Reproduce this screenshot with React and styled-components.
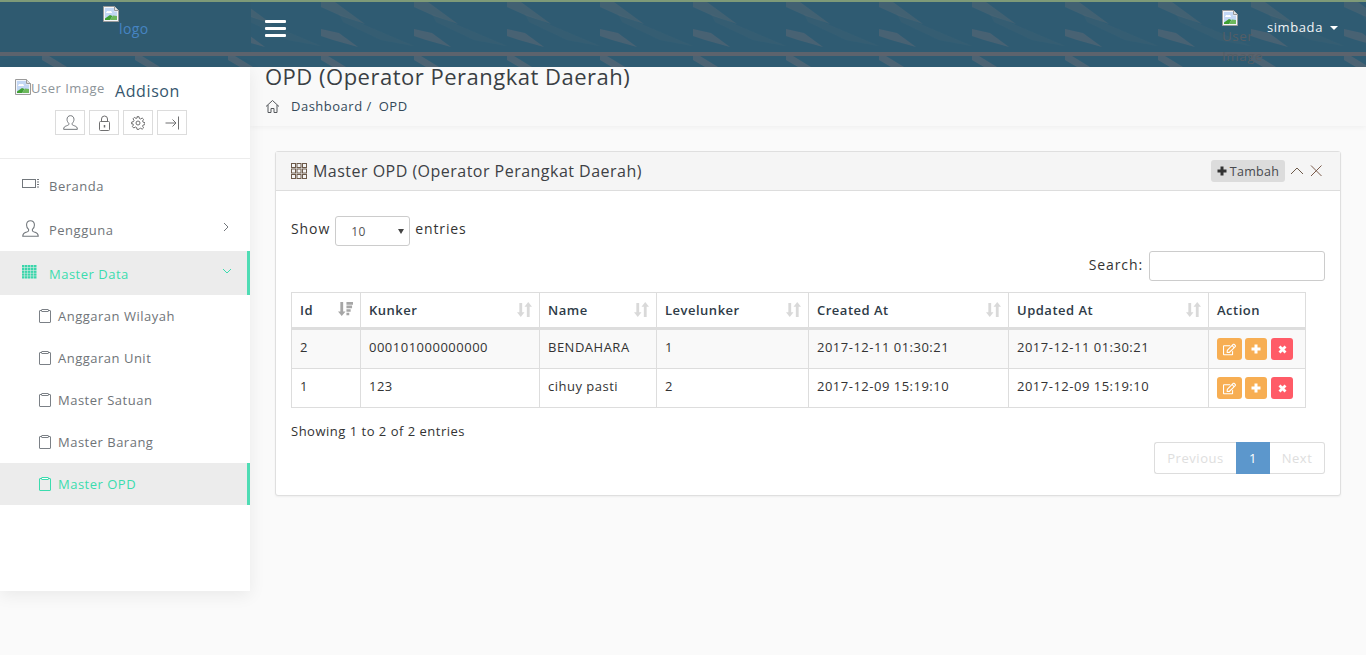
import React from "react";
import styled, { createGlobalStyle } from "styled-components";
import { FaRegEdit } from "react-icons/fa";

const Global = createGlobalStyle`
  html, body { margin: 0; padding: 0; background: #fafafa; }
  body { font-family: "Open Sans", "Liberation Sans", sans-serif; font-size: 13px; color: #333; letter-spacing: 0.5px; overflow: hidden; }
  * { box-sizing: border-box; }
`;

const Page = styled.div`
  width: 1366px; height: 655px; display: flex; flex-direction: column; background: #fafafa;
`;
const Header = styled.header`
  position: relative; height: 67px; flex: none; display: flex; align-items: flex-start;
  background: #2f5b72; border-top: 2px solid #7e9a78;
`;
const Pattern = styled.svg`
  position: absolute; left: 0; top: -2px; width: 100%; height: 67px;
`;
const LogoSlot = styled.div`
  position: relative; width: 251px; height: 50px; flex: none; background: #2f5a70; padding: 4px 0 0 103px;
`;
const LogoLink = styled.span`
  display: block; color: #4684c2; font-size: 14px; letter-spacing: 0.4px;
  svg { display: block; }
  span { display: block; margin-left: 16px; line-height: 13px; }
`;
const Band = styled.div`
  position: absolute; left: 0; right: 0; top: 50px; height: 4px; background: #5c636d;
`;
const Burger = styled.button`
  position: relative; margin: 18px 0 0 14px; padding: 0; width: 21px; height: 17px; border: 0; background: none;
  display: flex; flex-direction: column; justify-content: space-between;
  i { display: block; height: 3px; background: #fff; border-radius: 1px; }
`;
const UserNav = styled.div`
  position: relative; margin-left: auto; display: flex; align-items: flex-start; padding-right: 28px; height: 65px;
`;
const Avatar = styled.span`
  display: block; width: 39px; margin-top: 8px; margin-right: 6px; color: #555e66; font-size: 13.5px; line-height: 20px; letter-spacing: 0.5px;
  svg { display: block; }
`;
const UserName = styled.span`
  color: #f1f4f6; font-size: 13px; line-height: 18px; margin-top: 16px; display: flex; align-items: center; gap: 7px; letter-spacing: 0.6px;
`;
const Caret = styled.i`
  display: block; width: 0; height: 0; border-left: 4px solid transparent; border-right: 4px solid transparent; border-top: 4px solid #fff; margin-top: 2px;
`;

const Body = styled.div`
  display: flex; flex: 1; min-height: 0; align-items: flex-start;
`;
const Sidebar = styled.aside`
  width: 250px; height: 524px; flex: none; background: #fff; box-shadow: 0 4px 16px rgba(0,0,0,.07); position: relative;
`;
const Profile = styled.div`
  height: 92px; border-bottom: 1px solid #ececec; position: relative; padding: 12px 0 0 15px;
`;
const ProfileTop = styled.div`
  display: flex; align-items: flex-start;
`;
const UserAlt = styled.span`
  display: flex; color: #8d9499; font-size: 13px; line-height: 18px; letter-spacing: .5px; width: 100px;
  b { font-weight: 400; }
`;
const ProfileName = styled.span`
  color: #36566e; font-size: 16px; line-height: 22px; margin-top: 1px; letter-spacing: .6px;
`;
const ProfileButtons = styled.div`
  display: flex; gap: 4px; margin: 8px 0 0 40px;
`;
const SquareBtn = styled.span`
  width: 30px; height: 25px; border: 1px solid #dcdcdc; display: flex; align-items: center; justify-content: center; color: #6b6f73;
`;
const Nav = styled.nav`
  padding-top: 4px;
`;
const NavItem = styled.div`
  height: 44px; display: flex; align-items: center; padding-left: 22px; position: relative;
  color: ${p => p.$active ? "#3bdcae" : "#6f7478"};
  background: ${p => p.$active ? "#ececec" : "transparent"};
  border-right: 3px solid ${p => p.$active ? "#4fdcb4" : "transparent"};
`;
const NavIcon = styled.span`
  width: 27px; flex: none; display: flex; align-items: center; margin-top: -2px;
`;
const NavLabel = styled.span`
  font-size: 13px; flex: 1; letter-spacing: .5px; margin-top: 1px;
`;
const NavArrow = styled.span`
  width: 25px; flex: none; display: flex; margin-top: -4px;
`;
const SubItem = styled.div`
  height: 42px; display: flex; align-items: center; padding-left: 39px; font-size: 13px; letter-spacing: .5px;
  color: ${p => p.$active ? "#3bdcae" : "#6f7478"};
  background: ${p => p.$active ? "#ececec" : "transparent"};
  border-right: 3px solid ${p => p.$active ? "#4fdcb4" : "transparent"};
  svg { margin-right: 7px; flex: none; margin-top: -1px; }
`;

const Main = styled.main`
  flex: 1; min-width: 0; display: flex; flex-direction: column;
`;
const TitleBar = styled.div`
  height: 59px; background: #f9f9f9; padding-left: 15px; box-shadow: 0 1px 6px rgba(0,0,0,.05);
`;
const Title = styled.h1`
  margin: 0; font-weight: 400; font-size: 22px; line-height: 18px; color: #3a3f44; letter-spacing: .5px;
`;
const Crumbs = styled.div`
  display: flex; align-items: center; margin-top: 12px; color: #34495a; font-size: 13px; letter-spacing: .5px;
  svg { margin-right: 11px; }
  span + span { margin-left: 7px; }
`;
const Panel = styled.section`
  margin: 25px 25px 0 25px; height: 345px; background: #fff; border: 1px solid #dfdfdf; border-radius: 3px; box-shadow: 0 1px 2px rgba(0,0,0,.05);
`;
const PanelHead = styled.div`
  height: 39px; background: #f5f5f5; border-bottom: 1px solid #dddddd; display: flex; align-items: center; padding: 0 17px 0 15px;
`;
const PanelTitle = styled.span`
  font-size: 16px; color: #3d4145; letter-spacing: .48px; margin-left: 6px; flex: 1;
`;
const AddBtn = styled.span`
  height: 22px; width: 74px; background: #dcdcdc; border-radius: 3px; display: flex; align-items: center; justify-content: center; gap: 3px; font-size: 12.5px; color: #47494c; letter-spacing: .3px;
`;
const HeadTool = styled.span`
  display: flex; margin-left: 5px;
`;
const PanelBody = styled.div`
  padding: 25px 15px 0 15px;
`;
const LengthRow = styled.div`
  display: flex; align-items: flex-start; height: 30px; line-height: 26px; color: #333; font-size: 14px; letter-spacing: .9px; gap: 5px;
`;
const SelectBox = styled.span`
  width: 75px; height: 30px; border: 1px solid #ccc; border-radius: 3px; display: flex; align-items: center; justify-content: space-between; padding: 0 5px 0 15px; font-size: 12px; color: #555; background: #fff; letter-spacing: .5px;
  i { width: 0; height: 0; border-left: 3px solid transparent; border-right: 3px solid transparent; border-top: 5px solid #444; }
  b { font-weight: 400; margin-top: 2px; }
`;
const SearchRow = styled.div`
  display: flex; justify-content: flex-end; align-items: flex-start; height: 30px; line-height: 28px; margin-top: 5px; gap: 6px; font-size: 14px; letter-spacing: .9px;
`;
const SearchInput = styled.input`
  width: 176px; height: 30px; border: 1px solid #ccc; border-radius: 3px; background: #fff; outline: none;
`;
const Table = styled.table`
  border-collapse: collapse; table-layout: fixed; width: 1014px; margin-top: 11px; font-size: 13px;
  th, td { border: 1px solid #dddddd; padding: 0 8px; text-align: left; position: relative; }
  th { height: 36px; font-weight: 600; color: #2e3b47; border-bottom: 3px solid #dddddd; letter-spacing: .5px; }
  td { vertical-align: top; padding-top: 8px; line-height: 18px; color: #333; letter-spacing: .5px; }
`;
const Row = styled.tr`
  background: ${p => p.$odd ? "#f9f9f9" : "#fff"};
  td { height: ${p => p.$odd ? 40 : 39}px; }
`;
const SortIcon = styled.svg`
  position: absolute; right: 7px; top: 9px;
`;
const Actions = styled.div`
  display: flex; gap: 3px;
`;
const ActionBtn = styled.span`
  height: 22px; width: ${p => p.$w}px; border-radius: 3px; background: ${p => p.$danger ? "#ff5b67" : "#f7ae53"}; color: #fff; display: flex; align-items: center; justify-content: center;
  margin-left: ${p => p.$danger ? 1 : 0}px;
`;
const Info = styled.div`
  margin-top: 14px; font-size: 13px; color: #333; letter-spacing: .5px; line-height: 18px;
`;
const Pager = styled.div`
  display: flex; justify-content: flex-end; margin-top: 2px;
`;
const PageLink = styled.span`
  height: 32px; display: flex; align-items: center; justify-content: center; width: ${p => p.$w}px; font-size: 13px; letter-spacing: .55px;
  border: 1px solid ${p => p.$current ? "#5c97cc" : "#ddd"};
  ${p => p.$side === "l" ? "border-radius: 3px 0 0 3px; border-right: 0;" : ""}
  ${p => p.$side === "r" ? "border-radius: 0 3px 3px 0; border-left: 0;" : ""}
  background: ${p => p.$current ? "#5c97cc" : "#fff"};
  color: ${p => p.$current ? "#fff" : "#dedede"};
`;

const Broken = ({ s = 16 }) => (
  <svg width={s} height={s} viewBox="0 0 16 16">
    <path d="M.5.5h11l4 4v11H.5z" fill="#f4f6fa" stroke="#9a9a9a" />
    <path d="M2 2h9v3.500h3V14H2z" fill="#c3d7f4" />
    <path d="M3 7c.6-2 2-2.500 3-1.500C7 4.500 9 5 9 7z" fill="#fff" />
    <path d="M2 14v-1.500l5-3.500 2.500 1L7 14z" fill="#3f9f32" />
    <path d="M7 14l3-4.500 4 .5v4z" fill="#6db85c" />
    <path d="M11.500.5v4h4" fill="#e4e4e4" stroke="#9a9a9a" />
  </svg>
);
const Line = ({ w = 18, h = 18, vb = "0 0 18 18", c = "#6b6f73", sw = 1, children }) => (
  <svg width={w} height={h} viewBox={vb} fill="none" stroke={c} strokeWidth={sw}>{children}</svg>
);
const ChunkyPlus = ({ c = "#fff", s = 10 }) => (
  <Line w={s} h={s} vb="0 0 10 10" c={c} sw={3}><path d="M5 .5v9M.5 5h9" /></Line>
);
const ChunkyCross = () => (
  <Line w={9} h={9} vb="0 0 9 9" c="#fff" sw={2.800}><path d="M1.500 1.500l6 6M7.500 1.500l-6 6" /></Line>
);
const UserIcon = ({ s = 16, c }) => (
  <Line w={s} h={s} c={c} vb="0 0 16 16">
    <path d="M8 .7C5.700.7 4.300 2.400 4.300 4.600c0 1.800.8 3.300 1.900 4.200v1.200c0 .7-1 1-2.600 1.600C1.600 12.300.7 13 .7 15.300h14.600c0-2.300-.9-3-2.900-3.700-1.600-.6-2.600-.9-2.600-1.600V8.800c1.100-.9 1.900-2.400 1.900-4.200C11.700 2.400 10.300.7 8 .7z" />
  </Line>
);
const LockIcon = () => (
  <Line w={13} h={16} vb="0 0 13 16" c="#6f6f70">
    <rect x="1.500" y="6.500" width="10" height="9" rx="1" />
    <path d="M3.500 6.500V4a3 3 0 0 1 6 0v2.500" />
    <path d="M6.500 10v2.500" strokeWidth="1.500" />
  </Line>
);
const GearIcon = () => (
  <Line w={14} h={14} vb="0 0 14 14" c="#6f6f70">
    <circle cx="7" cy="7" r="2" />
    <path d="M6 .7h2l.4 1.800 1.200.5 1.600-1 1.400 1.400-1 1.600.5 1.200 1.800.4v2l-1.800.4-.5 1.200 1 1.600-1.400 1.400-1.600-1-1.200.5L8 13.300H6l-.4-1.800-1.200-.5-1.600 1-1.400-1.400 1-1.600-.5-1.200L.7 8V6l1.800-.4.5-1.200-1-1.600 1.400-1.400 1.600 1 1.200-.5z" />
  </Line>
);
const ExitIcon = () => (
  <Line w={15} h={14} vb="0 0 15 14" c="#6f6f70">
    <path d="M.5 7h10M7.500 3.500 11 7l-3.500 3.500M13.500 .5v13" />
  </Line>
);
const Clip = ({ c = "#7b8086" }) => (
  <Line w={12} h={14} vb="0 0 12 14" c={c}>
    <rect x=".5" y="1.500" width="11" height="12" rx=".5" />
    <rect x="3" y=".5" width="6" height="2" fill="#fff" />
  </Line>
);
const SortPair = ({ active }) => (
  <SortIcon width="15" height="15" viewBox="0 0 16 16">
    {active ? (
      <g fill="#a6a6a6">
        <path d="M2.500 0h3v10h2.500L4 15 0 10h2.500z" />
        <path d="M9 0h7v2.800H9zM9 3.800h6v2.800H9zM9 7.600h4.500v2.800H9zM9 11.400h3v2.800H9z" />
      </g>
    ) : (
      <g fill="#d9d9d9">
        <path d="M2.500 1h3v10H8l-4 5-4-5h2.500z" />
        <path d="M10.500 16h3V5H16l-4-5-4 5h2.500z" />
      </g>
    )}
  </SortIcon>
);

const rows = [
  { id: "2", kunker: "000101000000000", name: "BENDAHARA", lvl: "1", c: "2017-12-11 01:30:21", u: "2017-12-11 01:30:21" },
  { id: "1", kunker: "123", name: "cihuy pasti", lvl: "2", c: "2017-12-09 15:19:10", u: "2017-12-09 15:19:10" },
];
const cols = [
  ["Id", 69], ["Kunker", 179], ["Name", 117], ["Levelunker", 152], ["Created At", 200], ["Updated At", 200], ["Action", 97],
];
const subs = ["Anggaran Wilayah", "Anggaran Unit", "Master Satuan", "Master Barang", "Master OPD"];

export default function App() {
  return (
    <Page>
      <Global />
      <Header>
        <Pattern aria-hidden="true">
          <defs>
            <pattern id="hdr" width="93" height="67" patternUnits="userSpaceOnUse" patternTransform="translate(42 0)">
              <path d="M0 2 H14 L44 24 L20 16 L0 7z" fill="#6a6c74" opacity=".32" />
              <path d="M18 14 L93 46 L60 40 L22 22z" fill="#5f6a76" opacity=".13" />
              <path d="M0 29 L18 33 L37 47 L12 40 L0 36z" fill="#6a6c74" opacity=".42" />
              <path d="M0 56 H7 L25 67 H12 L0 60z" fill="#6a6c74" opacity=".5" />
            </pattern>
          </defs>
          <rect width="100%" height="100%" fill="url(#hdr)" />
        </Pattern>
        <Band />
        <LogoSlot>
          <LogoLink>
            <Broken />
            <span>logo</span>
          </LogoLink>
        </LogoSlot>
        <Burger aria-label="menu"><i /><i /><i /></Burger>
        <UserNav>
          <Avatar><Broken />User Image</Avatar>
          <UserName>simbada <Caret /></UserName>
        </UserNav>
      </Header>
      <Body>
        <Sidebar>
          <Profile>
            <ProfileTop>
              <UserAlt><Broken /><b>User Image</b></UserAlt>
              <ProfileName>Addison</ProfileName>
            </ProfileTop>
            <ProfileButtons>
              <SquareBtn><UserIcon s={15} /></SquareBtn>
              <SquareBtn><LockIcon /></SquareBtn>
              <SquareBtn><GearIcon /></SquareBtn>
              <SquareBtn><ExitIcon /></SquareBtn>
            </ProfileButtons>
          </Profile>
          <Nav>
            <NavItem>
              <NavIcon>
                <Line w={18} h={12} vb="0 0 18 12" c="#72777c">
                  <rect x=".5" y="1.500" width="13" height="8" />
                  <path d="M15 1.500h2M15 4h2M15 6.500h2M15 9h2" />
                </Line>
              </NavIcon>
              <NavLabel>Beranda</NavLabel>
            </NavItem>
            <NavItem>
              <NavIcon><UserIcon s={17} c="#72777c" /></NavIcon>
              <NavLabel>Pengguna</NavLabel>
              <NavArrow>
                <Line w={8} h={10} vb="0 0 8 10" c="#72777c"><path d="M2 1l4 4-4 4" /></Line>
              </NavArrow>
            </NavItem>
            <NavItem $active>
              <NavIcon>
                <svg width="15" height="14" viewBox="0 0 15 14" fill="#3bd6ab">
                  {[0, 1, 2, 3, 4].map(y => [0, 1, 2, 3, 4].map(x => (
                    <rect key={`${x}-${y}`} x={x * 3} y={y * 2.800} width="2.500" height="2.300" />
                  )))}
                </svg>
              </NavIcon>
              <NavLabel>Master Data</NavLabel>
              <NavArrow>
                <Line w={10} h={8} vb="0 0 10 8" c="#3bdcae"><path d="M1 2l4 4 4-4" /></Line>
              </NavArrow>
            </NavItem>
            {subs.map((s, i) => (
              <SubItem key={s} $active={i === 4}>
                <Clip c={i === 4 ? "#3bdcae" : "#7b8086"} />
                {s}
              </SubItem>
            ))}
          </Nav>
        </Sidebar>
        <Main>
          <TitleBar>
            <Title>OPD (Operator Perangkat Daerah)</Title>
            <Crumbs>
              <Line w={15} h={15} vb="0 0 15 15" c="#55585c">
                <path d="M1 7.500 7.500 1.500 14 7.500M3 6v7.500h3V9.500h3v4h3V6" />
              </Line>
              <span>Dashboard /</span>
              <span>OPD</span>
            </Crumbs>
          </TitleBar>
          <Panel>
            <PanelHead>
              <svg width="16" height="16" viewBox="0 0 16 16" fill="none" stroke="#6d5a4a">
                {[0, 1, 2].map(y => [0, 1, 2].map(x => (
                  <rect key={`${x}-${y}`} x={x * 5.500 + .5} y={y * 5.500 + .5} width="4" height="4" />
                )))}
              </svg>
              <PanelTitle>Master OPD (Operator Perangkat Daerah)</PanelTitle>
              <AddBtn><ChunkyPlus c="#333" />Tambah</AddBtn>
              <HeadTool>
                <Line w={14} h={10} vb="0 0 14 10" c="#6d5a4a"><path d="M1 8l6-6 6 6" /></Line>
              </HeadTool>
              <HeadTool>
                <Line w={14} h={12} vb="0 0 14 12" c="#7a5a4a"><path d="M2 .5l10.500 10.500M12.500 .5 2 11" /></Line>
              </HeadTool>
            </PanelHead>
            <PanelBody>
              <LengthRow>
                Show
                <SelectBox><b>10</b><i /></SelectBox>
                entries
              </LengthRow>
              <SearchRow>Search: <SearchInput /></SearchRow>
              <Table>
                <colgroup>{cols.map(([n, w]) => <col key={n} style={{ width: w }} />)}</colgroup>
                <thead>
                  <tr>
                    {cols.map(([n], i) => (
                      <th key={n}>{n}{i < 6 && <SortPair active={i === 0} />}</th>
                    ))}
                  </tr>
                </thead>
                <tbody>
                  {rows.map((r, i) => (
                    <Row key={r.id} $odd={i === 0}>
                      <td>{r.id}</td>
                      <td>{r.kunker}</td>
                      <td>{r.name}</td>
                      <td>{r.lvl}</td>
                      <td>{r.c}</td>
                      <td>{r.u}</td>
                      <td>
                        <Actions>
                          <ActionBtn $w={25}><FaRegEdit size={13} /></ActionBtn>
                          <ActionBtn $w={22}><ChunkyPlus /></ActionBtn>
                          <ActionBtn $w={22} $danger><ChunkyCross /></ActionBtn>
                        </Actions>
                      </td>
                    </Row>
                  ))}
                </tbody>
              </Table>
              <Info>Showing 1 to 2 of 2 entries</Info>
              <Pager>
                <PageLink $w={82} $side="l">Previous</PageLink>
                <PageLink $w={34} $current>1</PageLink>
                <PageLink $w={55} $side="r">Next</PageLink>
              </Pager>
            </PanelBody>
          </Panel>
        </Main>
      </Body>
    </Page>
  );
}
